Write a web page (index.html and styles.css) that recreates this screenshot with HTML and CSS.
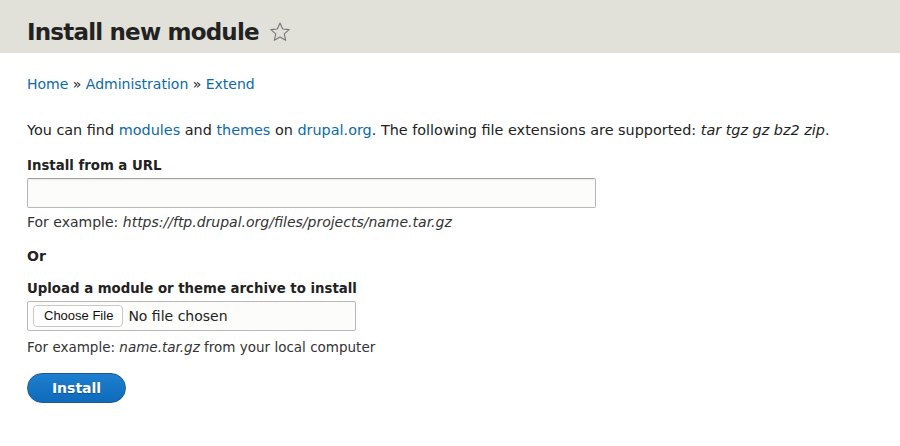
FILE: index.html
```html
<!DOCTYPE html>
<html>
<head>
<meta charset="utf-8">
<link rel="stylesheet" href="styles.css">
</head>
<body>
<header class="page-header">
  <h1 class="title">Install new module <svg class="star" width="22" height="22" viewBox="0 0 24 24"><path d="M12 2.2l2.9 6.6 7.1.6-5.4 4.7 1.6 7-6.2-3.7-6.2 3.7 1.6-7L2 9.4l7.1-.6z" fill="none" stroke="#777" stroke-width="1.2" stroke-linejoin="round"/></svg></h1>
</header>
<main class="content">
  <nav class="breadcrumb"><a href="#">Home</a> » <a href="#">Administration</a> » <a href="#">Extend</a></nav>
  <p class="intro">You can find <a href="#">modules</a> and <a href="#">themes</a> on <a href="#">drupal.org</a>. The following file extensions are supported: <em>tar tgz gz bz2 zip</em>.</p>
  <div class="field">
    <label class="label">Install from a URL</label>
    <div class="text-input"></div>
    <div class="desc desc-url">For example: <em>https://ftp.drupal.org/files/projects/name.tar.gz</em></div>
  </div>
  <div class="or">Or</div>
  <div class="field field-upload">
    <label class="label">Upload a module or theme archive to install</label>
    <div class="file-input"><span class="choose">Choose File</span><span class="nofile">No file chosen</span></div>
    <div class="desc desc-file">For example: <em>name.tar.gz</em> from your local computer</div>
  </div>
  <div class="actions"><button class="btn-primary">Install</button></div>
</main>
</body>
</html>
```
FILE: styles.css
```css
html, body { margin: 0; padding: 0; background: #fff; }
body {
  font-family: "DejaVu Sans", Verdana, sans-serif;
  font-size: 14px;
  color: #222;
}
a { color: #0b6aa8; text-decoration: none; }
.page-header {
  background: #e1e0d9;
  height: 53px;
  box-sizing: border-box;
  padding: 10px 27px 0;
  display: flex;
  align-items: center;
}
.title {
  margin: 0;
  font-size: 23px;
  font-weight: bold;
  color: #222;
  display: flex;
  align-items: center;
  gap: 10px;
  letter-spacing: -0.8px;
}
.content { padding: 21px 27px 0; }
.breadcrumb { font-size: 14px; line-height: 20px; }
.intro { margin: 26px 0 0; font-size: 14.4px; line-height: 20px; }
.field { margin-top: 16px; }
.field-upload { margin-top: 13px; }
.label { display: block; font-weight: bold; font-size: 13.3px; line-height: 20px; margin-bottom: 2px; }
.text-input {
  box-sizing: border-box;
  width: 569px; height: 30px;
  border: 1px solid #b8b8b8;
  border-top-color: #a0a0a0;
  border-radius: 2px;
  background: #fcfcfa;
  box-shadow: inset 0 1px 2px rgba(0,0,0,0.08);
}
.desc { font-size: 14px; line-height: 20px; color: #333; }
.desc-url { margin-top: 4px; }
.desc-file { margin-top: 6px; font-size: 13.5px; }
.or { font-weight: bold; font-size: 14px; margin-top: 14px; line-height: 20px; }
.file-input {
  box-sizing: border-box;
  width: 329px; height: 30px;
  border: 1px solid #b8b8b8;
  border-radius: 2px;
  background: #fcfcfa;
  display: flex; align-items: center;
  padding-left: 5px;
  gap: 5px;
}
.choose {
  font-family: "Liberation Sans", Arial, sans-serif;
  font-size: 13px;
  border: 1px solid #c8c8c8;
  border-radius: 4px;
  background: #fff;
  padding: 1px 9px 1px 10px;
  height: 18px; line-height: 18px;
  color: #111;
}
.nofile { font-size: 14px; color: #222; }
.actions { margin-top: 16px; }
.btn-primary {
  font-family: "DejaVu Sans", Verdana, sans-serif;
  font-weight: bold; font-size: 14px;
  color: #fff;
  width: 99px; height: 30px;
  border-radius: 15px;
  border: 1px solid #1e5c90;
  background: linear-gradient(#1d7fcd, #0f6bbc);
  text-shadow: 0 1px 1px rgba(0,0,0,0.3);
  padding: 0;
  display: block;
}
```
